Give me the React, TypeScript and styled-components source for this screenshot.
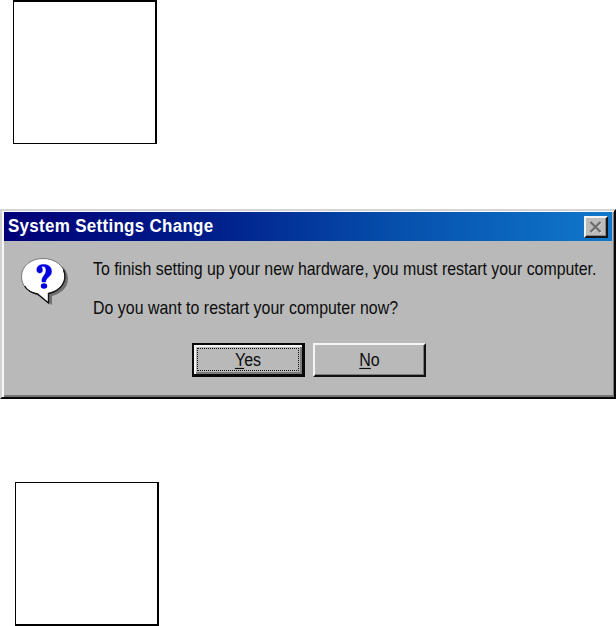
import React from 'react'
import styled, { createGlobalStyle } from 'styled-components'

const GlobalStyle = createGlobalStyle`
  body {
    margin: 0;
    background: #fff;
    overflow: hidden;
  }
`

const Page = styled.div`
  display: flex;
  flex-direction: column;
  width: 616px;
  height: 626px;
  font-family: "Liberation Sans", Arial, sans-serif;
  color: #0c0c0c;
`

const Frame = styled.div<{ $last?: boolean }>`
  box-sizing: border-box;
  width: 144px;
  height: 144px;
  border: solid #000;
  border-width: ${({ $last }) => ($last ? '1px 2px 2px 1px' : '2px 2px 1px 1px')};
  margin-left: ${({ $last }) => ($last ? 15 : 13)}px;
`

const Dialog = styled.div`
  box-sizing: border-box;
  height: 190px;
  margin: 65px 0 83px;
  padding: 1px 0 0 1px;
  background: #b9b9b9;
  border: solid;
  border-width: 2px;
  border-color: #d5d5d5 #080808 #080808 #d2d2d2;
  box-shadow: inset 2px 1px #f8f8f8, inset -1px -2px #777;
`

const TitleBar = styled.div`
  display: flex;
  align-items: center;
  justify-content: space-between;
  box-sizing: border-box;
  height: 29px;
  margin: 0 2px 0 1px;
  padding: 0 4px;
  background: linear-gradient(90deg, #000078 0%, #00208c 35%, #0650ac 65%, #1078cc 100%);
`

// the dialog font is taller and narrower than Arial
const Text = styled.span`
  display: block;
  transform: scaleY(1.13);
  white-space: nowrap;
`

const Title = styled(Text)`
  padding-top: 1px;
  color: #fff;
  font-size: 17px;
  font-weight: bold;
  letter-spacing: 0.28px;
  line-height: 28px;
  transform: scaleY(1.06);
`

const Close = styled.div`
  display: flex;
  align-items: center;
  justify-content: center;
  box-sizing: border-box;
  width: 24px;
  height: 22px;
  background: #bcbcbc;
  border: 2px solid;
  border-color: #f2f2f2 #151515 #151515 #f2f2f2;
  box-shadow: inset -1px -1px #888;
`

const Content = styled.div`
  display: flex;
  height: 101px;
`

const IconWrapper = styled.div`
  width: 51px;
  padding: 14px 0 0 16px;
`

const Messages = styled.div`
  padding: 18px 0 0 23px;
  font-size: 15.9px;
  line-height: 20px;

  ${Text} + ${Text} {
    margin-top: 19px;
    letter-spacing: 0.03px;
  }
`

const Buttons = styled.div`
  display: flex;
  gap: 8px;
  padding: 1px 0 0 189px;
`

const Button = styled.button<{ $primary?: boolean }>`
  display: flex;
  align-items: center;
  justify-content: center;
  box-sizing: border-box;
  width: 113px;
  height: 34px;
  padding: 3px;
  color: inherit;
  font: 16px/20px "Liberation Sans", Arial, sans-serif;
  background: #b9b9b9;
  border: solid;
  border-width: ${({ $primary }) => ($primary ? '2px 3px 3px 2px' : '2px')};
  border-color: ${({ $primary }) => ($primary ? '#080808' : '#f5f5f5 #111 #111 #f5f5f5')};
  border-radius: 0;
  box-shadow: ${({ $primary }) =>
    $primary ? 'inset 2px 2px #f2f2f2, inset -2px -2px #7b7b7b' : 'inset -1px -1px #7b7b7b'};
`

const Focus = styled.span<{ $on?: boolean }>`
  display: flex;
  align-items: center;
  justify-content: center;
  box-sizing: border-box;
  width: 100%;
  height: 23px;
  border: ${({ $on }) => ($on ? '1px dotted #111' : '1px solid transparent')};
`

const Label = styled(Text)`
  u {
    text-decoration-thickness: 1px;
    text-underline-offset: 2px;
  }
`

function QuestionIcon() {
  return (
    <svg width="50" height="51" viewBox="0 0 50 51" style={{ display: 'block' }}>
      <path
        d="M27 6C39 6 49 13 49 24C49 33 41 39 33 41L33 50L21 41C11 39 5 33 5 24C5 13 14 6 27 6Z"
        fill="#707070"
      />
      <path
        d="M24 3.5C36 3.5 46 11 46 21.5C46 31 39 36 29.5 38.5L29.5 48L18.5 39C9 37 2.5 31 2.5 21.5C2.5 11 12 3.5 24 3.5Z"
        fill="#fff"
        stroke="#777"
      />
      <path
        d="M44.5 14.5C49 26 42 36 29.5 38.5V48L18.5 39C13 38 8 35 5.5 31"
        fill="none"
        stroke="#151515"
        strokeWidth="1.4"
      />
      <path
        d="M18 16C17 11.5 20.5 9.5 24.5 9.5C29.5 9.5 32.5 12 32.5 16.5C32.5 22 27.5 21.5 26.5 27H23C22 21.5 27.5 20 27 15C26.8 11.5 24 10.5 22.5 12C24 14 24 17.5 21 18C19 18.2 18.2 17 18 16Z"
        fill="#0000e0"
        stroke="#0000e0"
        strokeWidth="0.5"
      />
      <ellipse cx="25" cy="31" rx="3.2" ry="2.8" fill="#0000e0" />
    </svg>
  )
}

function App() {
  return (
    <>
      <GlobalStyle />
      <Page>
        <Frame />
        <Dialog>
          <TitleBar>
            <Title>System Settings Change</Title>
            <Close>
              <svg width="14" height="14" viewBox="0 0 14 14">
                <path d="M2 2.5L12 12.5M12 2.5L2 12.5" stroke="#eee" strokeWidth="2" />
                <path d="M1.5 2L11.5 12M11.5 2L1.5 12" stroke="#6d6d6d" strokeWidth="2.4" />
              </svg>
            </Close>
          </TitleBar>
          <Content>
            <IconWrapper>
              <QuestionIcon />
            </IconWrapper>
            <Messages>
              <Text>To finish setting up your new hardware, you must restart your computer.</Text>
              <Text>Do you want to restart your computer now?</Text>
            </Messages>
          </Content>
          <Buttons>
            <Button $primary>
              <Focus $on>
                <Label><u>Y</u>es</Label>
              </Focus>
            </Button>
            <Button>
              <Focus>
                <Label><u>N</u>o</Label>
              </Focus>
            </Button>
          </Buttons>
        </Dialog>
        <Frame $last />
      </Page>
    </>
  )
}

export default App
